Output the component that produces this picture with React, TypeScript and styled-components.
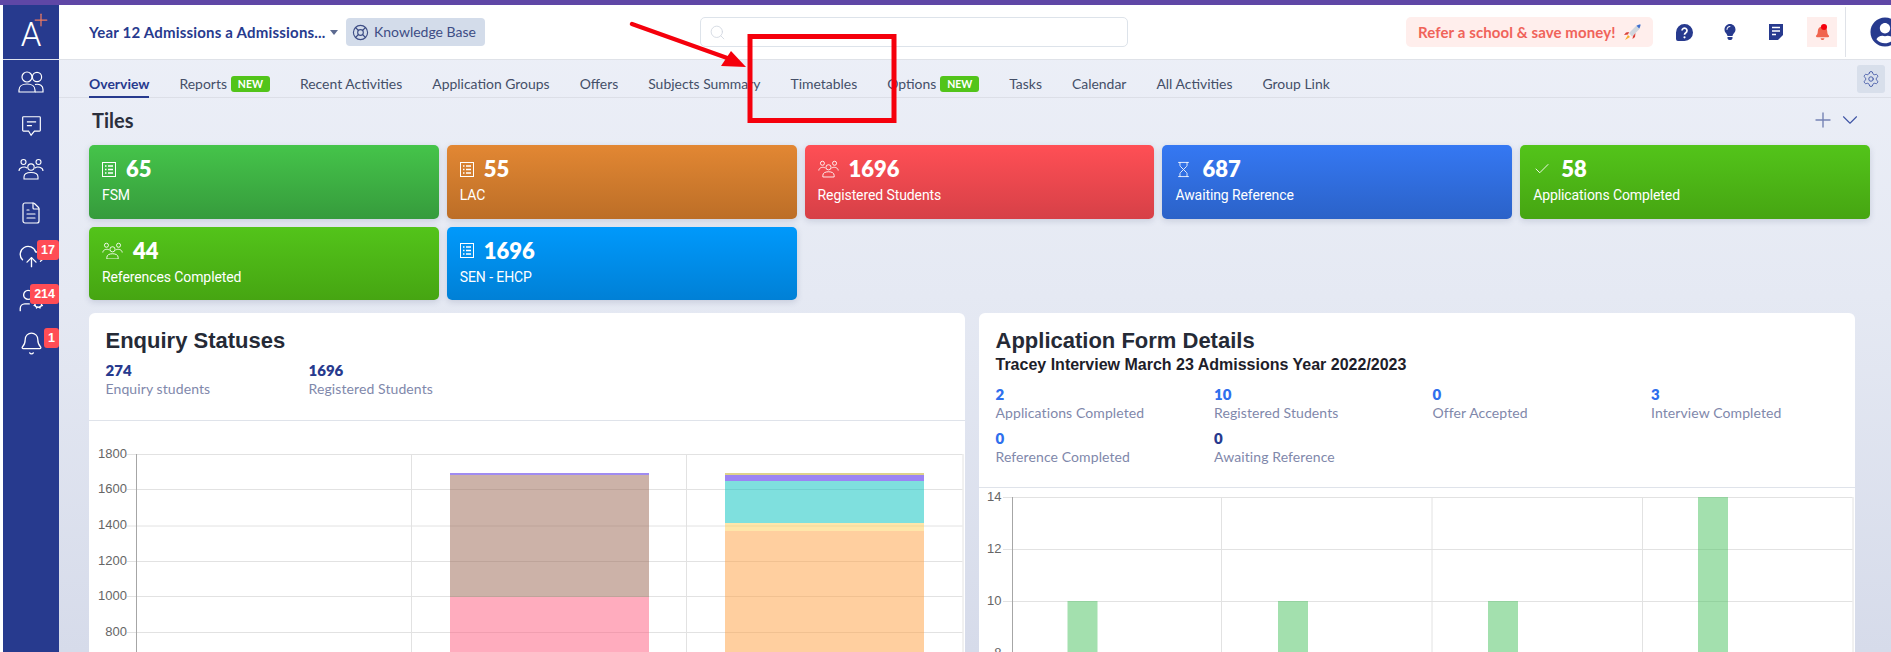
import React from "react";
import styled, { createGlobalStyle } from "styled-components";
import { FaBell, FaLightbulb, FaUserCircle } from "react-icons/fa";
import { LifeBuoy, Search, Settings, Plus, ChevronDown, Hourglass, Check, FileText, CloudUpload, Bell, UserCog } from "lucide-react";

const Global = createGlobalStyle`
  html, body { margin: 0; padding: 0; height: 100%; background: #fff; overflow: hidden; }
  * { box-sizing: border-box; }
  body { font-family: Lato, "Liberation Sans", sans-serif; }
`;

const Page = styled.div`
  position: relative; width: 1891px; height: 652px; overflow: hidden;
  display: flex; flex-direction: column;
`;
const TopStrip = styled.div`height: 5px; flex: none; background: #5f47a6;`;
const Body = styled.div`flex: 1; display: flex; min-height: 0; padding-left: 3px;`;
const Side = styled.aside`width: 56px; flex: none; background: #273a8e; display: flex; flex-direction: column;`;
const LogoBox = styled.div`
  height: 55px; flex: none; position: relative; border-bottom: 1px solid #dfe3ee;
  display: flex; align-items: center; justify-content: center;
`;
const LogoA = styled.span`font: 300 33px/1 Roboto, sans-serif; color: #fff; margin-top: 5px;`;
const LogoPlus = styled(Plus)`position: absolute; left: 28px; top: 5px; color: #ee7a60;`;
const SideList = styled.nav`display: flex; flex-direction: column;`;
const SideItem = styled.div`
  height: 43.7px; position: relative; display: flex; align-items: center; justify-content: center;
  color: #fff;
`;
const Badge = styled.span`
  position: absolute; right: 0; top: 5.5px; height: 20px; min-width: 15px; padding: 0 4px;
  background: #ff4d55; color: #fff; border-radius: 3px; font: 700 12.5px/20px "Liberation Sans", sans-serif; text-align: center;
`;
const Main = styled.main`
  flex: 1; min-width: 0; display: flex; flex-direction: column;
  background: linear-gradient(180deg, #edf0f8 0%, #e5e9f3 45%, #d6dbea 100%);
`;
const Header = styled.header`
  height: 55px; flex: none; background: #fff; border-bottom: 1px solid #dfe2e8;
  display: flex; align-items: center; padding: 0 0 0 30px; position: relative;
`;
const Course = styled.div`
  width: 240px; flex: none; color: #273a8e; font: 700 15px/20px Lato, sans-serif; letter-spacing: .2px;
  white-space: nowrap; overflow: hidden;
`;
const Caret = styled.span`
  width: 0; height: 0; margin: 0 8px 0 1px; border-left: 4.5px solid transparent; border-right: 4.5px solid transparent;
  border-top: 5px solid #5c6a90;
`;
const Chip = styled.div`
  width: 139px; height: 28px; flex: none; border-radius: 4px; background: #d3dcea; color: #3d4d85;
  display: flex; align-items: center; gap: 5px; padding-left: 6px; font: 400 14px/1 Lato, sans-serif; white-space: nowrap;
`;
const SearchBox = styled.div`
  width: 428px; height: 30px; margin-left: 215px; flex: none; border: 1px solid #dde3ea; border-radius: 5px;
  display: flex; align-items: center; padding-left: 8px; color: #d3d9e2;
`;
const Refer = styled.div`
  width: 247px; height: 30px; margin-left: 278px; flex: none; border-radius: 5px; background: #ffeeec; color: #f0635a;
  display: flex; align-items: center; gap: 8px; padding-left: 12px; font: 700 15px/1 Lato, sans-serif; letter-spacing: .1px; white-space: nowrap;
`;
const IconRow = styled.div`display: flex; gap: 16px; margin-left: 16px; flex: none;`;
const HeadIcon = styled.div<{ $hot?: boolean }>`
  width: 30px; height: 30px; position: relative; display: flex; align-items: center; justify-content: center;
  color: ${p => (p.$hot ? "#f0654f" : "#273a8e")}; background: ${p => (p.$hot ? "#feeeec" : "transparent")};
`;
const BellDot = styled.span`position: absolute; left: 14px; top: 7px; width: 6px; height: 6px; border-radius: 50%; background: #f5000c;`;
const VRule = styled.div`width: 1px; height: 50px; background: #dfe2e8; margin-left: 8px; flex: none;`;
const Avatar = styled(FaUserCircle)`margin-left: 24px; flex: none; color: #273a8e;`;

const TabBar = styled.div`
  height: 38px; flex: none; border-bottom: 1px solid #dcdfe7; display: flex; align-items: stretch;
  padding: 0 6px 0 30px; gap: 30px; position: relative;
`;
const Tab = styled.div<{ $active?: boolean }>`
  display: flex; align-items: center; gap: 4px; padding-top: 12px; white-space: nowrap; height: 38px;
  font: ${p => (p.$active ? 700 : 400)} 13.95px/20px Lato, sans-serif;
  color: ${p => (p.$active ? "#273a8e" : "#444f68")};
  border-bottom: 2px solid ${p => (p.$active ? "#273a8e" : "transparent")};
`;
const NewTag = styled.span`
  width: 39px; height: 16px; border-radius: 3px; background: #52c41a; color: #fff; text-align: center;
  font: 700 10.5px/16px Lato, sans-serif;
`;
const GearBtn = styled.div`
  position: absolute; right: 6px; top: 5px; width: 28px; height: 28px; border-radius: 3px; background: #d8dfeb; color: #3f55a5;
  display: flex; align-items: center; justify-content: center;
`;

const Content = styled.div`flex: 1; padding: 0 21px 0 30px; min-height: 0;`;
const SectionHead = styled.div`height: 47px; padding: 10px 7.5px 13px 3px; display: flex; align-items: center; justify-content: space-between;`;
const SectionTitle = styled.h2`margin: 0; font: 700 20px/24px Lato, sans-serif; color: #2b2f3d;`;
const SectionTools = styled.div`display: flex; align-items: center; gap: 1.5px; color: #7683b5;`;
const TileGrid = styled.div`display: grid; grid-template-columns: repeat(5, 1fr); gap: 8px;`;
const Tile = styled.div<{ $from: string; $to: string }>`
  height: 73.5px; border-radius: 5px; padding: 12px 13px 0; color: #fff;
  background: linear-gradient(180deg, ${p => p.$from}, ${p => p.$to});
  box-shadow: 0 2px 6px rgba(60, 70, 110, .18);
`;
const TileTop = styled.div`display: flex; align-items: center; gap: 10px; height: 24px;`;
const TileNum = styled.span`font: 800 22px/24px Lato, sans-serif;`;
const TileLabel = styled.div`margin-top: 4px; font: 400 14px/20px Roboto, sans-serif; white-space: nowrap; letter-spacing: -.1px;`;

const Panels = styled.div`display: flex; gap: 14px; margin-top: 13px;`;
const Panel = styled.section`width: 876px; flex: none; background: #fff; border-radius: 6px 6px 0 0; overflow: hidden;`;
const PanelHead = styled.div<{ $h: number }>`height: ${p => p.$h}px; padding: 15px 16.5px 0; border-bottom: 1px solid #dfe3ea;`;
const PanelTitle = styled.h3`margin: 0; font: 700 22px/26px "Liberation Sans", sans-serif; color: #252a36;`;
const PanelSub = styled.div`margin: 1px 0 10px; font: 700 16px/20px "Liberation Sans", sans-serif; color: #1d2029;`;
const Stats = styled.div<{ $w: number; $top?: number }>`
  display: grid; grid-template-columns: repeat(4, ${p => p.$w}px); row-gap: 6px; margin-top: ${p => p.$top ?? 0}px;
`;
const StatNum = styled.div<{ $c: string }>`font: 800 15px/18px Lato, sans-serif; color: ${p => p.$c};`;
const StatLabel = styled.div`font: 400 14px/20px Lato, sans-serif; letter-spacing: .1px; color: #7f88ab; white-space: nowrap;`;
const ChartSvg = styled.svg`display: block;`;
const ArrowLayer = styled.svg`position: absolute; left: 0; top: 0; pointer-events: none;`;

const TwoPeople = () => (
  <svg width="26" height="24" viewBox="0 0 26 24" fill="none" stroke="currentColor" strokeWidth="1.2">
    <circle cx="9" cy="7" r="5" /><circle cx="19" cy="7" r="4.6" />
    <path d="M1 22v-2c0-3.5 3-6 8-6s8 2.500 8 6v2z" /><path d="M17 14.500c5-1 8 1.500 8 5v2.500h-8" />
  </svg>
);
const ThreePeople = ({ s = 26 }: { s?: number }) => (
  <svg width={s} height={s * 0.85} viewBox="0 0 26 22" fill="none" stroke="currentColor" strokeWidth="1.1">
    <circle cx="5.500" cy="4" r="2.500" /><circle cx="20.500" cy="4" r="2.500" /><circle cx="13" cy="9" r="3.200" />
    <path d="M1 13c0-4 6-5 8-3" /><path d="M25 13c0-4-6-5-8-3" />
    <path d="M6 21v-2c0-3 3-4.500 7-4.500s7 1.500 7 4.500v2z" />
  </svg>
);
const Bubble = () => (
  <svg width="21" height="22" viewBox="0 0 25 26" fill="none" stroke="currentColor" strokeWidth="1.4">
    <path d="M3 2h19a1 1 0 0 1 1 1v15a1 1 0 0 1-1 1h-6l-4 5-3-5H3a1 1 0 0 1-1-1V3a1 1 0 0 1 1-1z" />
    <path d="M7 8h11M7 12.500h6" />
  </svg>
);
const ListBox = () => (
  <svg width="14" height="15" viewBox="0 0 14 15" fill="none" stroke="currentColor" strokeWidth="1">
    <rect x=".5" y=".5" width="13" height="14" /><path d="M3 4h1.500M6 4h5M3 7.500h1.500M6 7.500h5M3 11h1.500M6 11h5" strokeWidth="1.400" />
  </svg>
);
const QuestionIcon = () => (
  <svg width="17" height="17" viewBox="0 0 17 17">
    <path d="M8.500 0a8.500 8.500 0 1 1 0 17H2a2 2 0 0 1-2-2V8.500A8.500 8.500 0 0 1 8.500 0z" fill="currentColor" />
    <path d="M6 6.500a2.500 2.500 0 1 1 3.800 2.200c-.9.600-1.300 1-1.300 2" fill="none" stroke="#fff" strokeWidth="1.700" />
    <circle cx="8.500" cy="13.300" r="1.100" fill="#fff" />
  </svg>
);
const NoteIcon = () => (
  <svg width="14" height="16" viewBox="0 0 14 16">
    <path d="M0 0h14v11l-5 5H0z" fill="currentColor" />
    <path d="M3 3.500h8M3 7h8M3 10.500h4" stroke="#fff" strokeWidth="1.600" />
  </svg>
);
const Rocket = () => (
  <svg width="17" height="17" viewBox="0 0 17 17">
    <path d="M5 9 12 2c1.500-1 3.500-1.500 4.500-1.500C16.500 2 16 4 15 5.500L8 12.500z" fill="#cfd5dd" />
    <path d="M12.500 1.700c1.300-.7 3-1.200 4-1.200 0 1.200-.5 2.800-1.300 4z" fill="#3f6fd0" />
    <path d="M5 8 2 8.500 0 11l4-.5zM9 12l-.5 3 2.500-2 .5-4z" fill="#d9413a" />
    <path d="M4 11 1 16l5-3z" fill="#f6b02c" />
  </svg>
);

const tabs = [
  { t: "Overview", active: true }, { t: "Reports", isNew: true }, { t: "Recent Activities" }, { t: "Application Groups" },
  { t: "Offers" }, { t: "Subjects Summary" }, { t: "Timetables" }, { t: "Options", isNew: true }, { t: "Tasks" },
  { t: "Calendar" }, { t: "All Activities" }, { t: "Group Link" },
];
const tiles = [
  { n: "65", l: "FSM", i: <ListBox />, a: "#45c44a", b: "#369b3c" },
  { n: "55", l: "LAC", i: <ListBox />, a: "#e28733", b: "#bc6e27" },
  { n: "1696", l: "Registered Students", i: <ThreePeople s={21} />, a: "#ff4f55", b: "#d64047" },
  { n: "687", l: "Awaiting Reference", i: <Hourglass size={17} strokeWidth={1.2} />, a: "#3578f3", b: "#2b62c8" },
  { n: "58", l: "Applications Completed", i: <Check size={18} strokeWidth={1.2} />, a: "#53c41a", b: "#46a512" },
  { n: "44", l: "References Completed", i: <ThreePeople s={21} />, a: "#53c41a", b: "#46a512" },
  { n: "1696", l: "SEN - EHCP", i: <ListBox />, a: "#0099fb", b: "#0080d6" },
];
const sideItems = [
  { i: <TwoPeople /> }, { i: <Bubble /> }, { i: <ThreePeople /> }, { i: <FileText size={24} strokeWidth={1.2} /> },
  { i: <CloudUpload size={27} strokeWidth={1.2} />, b: "17" }, { i: <UserCog size={27} strokeWidth={1.2} />, b: "214" },
  { i: <Bell size={25} strokeWidth={1.2} />, b: "1" },
];
const rightStats = [
  ["2", "Applications Completed", "#2f6fed"], ["10", "Registered Students", "#2f6fed"], ["0", "Offer Accepted", "#2f6fed"],
  ["3", "Interview Completed", "#2f6fed"], ["0", "Reference Completed", "#2f6fed"], ["0", "Awaiting Reference", "#273a8e"],
];

const grid = "#e2e2e2";
const LeftChart = () => {
  const ys = [[1800, 33], [1600, 68], [1400, 104.500], [1200, 140], [1000, 175], [800, 211]] as const;
  const vx = [47, 322, 597, 873.500];
  const left = [["rgba(255,90,125,.5)", 176, 55], ["rgba(153,102,82,.5)", 54, 122], ["rgba(120,90,235,.7)", 52, 2]] as const;
  const right = [["rgba(255,159,64,.5)", 110, 121], ["rgba(255,205,86,.5)", 102, 8], ["rgba(0,193,190,.5)", 60, 42], ["rgba(90,50,235,.6)", 54, 6], ["rgba(200,180,60,.6)", 52, 2]] as const;
  return (
    <ChartSvg width="876" height="231" viewBox="0 0 876 231">
      {ys.map(([v, y]) => (
        <g key={v}>
          <line x1="38" x2="873.500" y1={y + .5} y2={y + .5} stroke={grid} />
          <text x="38" y={y + 3.500} textAnchor="end" fontSize="13" fill="#666" fontFamily="Liberation Sans">{v}</text>
        </g>
      ))}
      {vx.map((x, i) => <line key={x} x1={x + .5} x2={x + .5} y1="33" y2="231" stroke={i ? grid : "#a6a6a6"} />)}
      {left.map(([c, y, h]) => <rect key={c} x="361" y={y} width="199" height={h} fill={c} />)}
      {right.map(([c, y, h]) => <rect key={c} x="636" y={y} width="199" height={h} fill={c} />)}
    </ChartSvg>
  );
};
const RightChart = () => {
  const ys = [[14, 9], [12, 61], [10, 113], [8, 165]] as const;
  const vx = [33, 242, 452.500, 663, 873.500];
  const bars = [[88.500, 113], [299, 113], [509, 113], [719, 9]] as const;
  return (
    <ChartSvg width="876" height="164" viewBox="0 0 876 164">
      {ys.map(([v, y]) => (
        <g key={v}>
          <line x1="24" x2="873.500" y1={y + .5} y2={y + .5} stroke={grid} />
          <text x="22.500" y={y + 3.500} textAnchor="end" fontSize="13" fill="#666" fontFamily="Liberation Sans">{v}</text>
        </g>
      ))}
      {vx.map((x, i) => <line key={x} x1={x + .5} x2={x + .5} y1="9" y2="164" stroke={i ? grid : "#a6a6a6"} />)}
      {bars.map(([x, y]) => <rect key={x} x={x} y={y} width="30" height={164 - y} fill="rgba(71,193,93,.5)" />)}
    </ChartSvg>
  );
};

export default function App() {
  return (
    <Page>
      <Global />
      <TopStrip />
      <Body>
        <Side>
          <LogoBox><LogoA>A</LogoA><LogoPlus size={20} strokeWidth={1.5} /></LogoBox>
          <SideList>
            {sideItems.map((s, i) => <SideItem key={i}>{s.i}{s.b && <Badge>{s.b}</Badge>}</SideItem>)}
          </SideList>
        </Side>
        <Main>
          <Header>
            <Course>Year 12 Admissions a Admissions...</Course>
            <Caret />
            <Chip><LifeBuoy size={17} strokeWidth={1.6} />Knowledge Base</Chip>
            <SearchBox><Search size={17} strokeWidth={1.3} /></SearchBox>
            <Refer>Refer a school &amp; save money!<Rocket /></Refer>
            <IconRow>
              <HeadIcon><QuestionIcon /></HeadIcon>
              <HeadIcon><FaLightbulb size={16} /></HeadIcon>
              <HeadIcon><NoteIcon /></HeadIcon>
              <HeadIcon $hot><FaBell size={15} /><BellDot /></HeadIcon>
            </IconRow>
            <VRule />
            <Avatar size={30} />
          </Header>
          <TabBar>
            {tabs.map(t => (
              <Tab key={t.t} $active={t.active}>{t.t}{t.isNew && <NewTag>NEW</NewTag>}</Tab>
            ))}
            <GearBtn><Settings size={18} strokeWidth={1.2} /></GearBtn>
          </TabBar>
          <Content>
            <SectionHead>
              <SectionTitle>Tiles</SectionTitle>
              <SectionTools><Plus size={24} strokeWidth={1.4} /><ChevronDown size={26} strokeWidth={1} color="#3f55a5" /></SectionTools>
            </SectionHead>
            <TileGrid>
              {tiles.map(t => (
                <Tile key={t.l} $from={t.a} $to={t.b}>
                  <TileTop>{t.i}<TileNum>{t.n}</TileNum></TileTop>
                  <TileLabel>{t.l}</TileLabel>
                </Tile>
              ))}
            </TileGrid>
            <Panels>
              <Panel>
                <PanelHead $h={108}>
                  <PanelTitle>Enquiry Statuses</PanelTitle>
                  <Stats $w={203} $top={7}>
                    <div><StatNum $c="#273a8e">274</StatNum><StatLabel>Enquiry students</StatLabel></div>
                    <div><StatNum $c="#273a8e">1696</StatNum><StatLabel>Registered Students</StatLabel></div>
                  </Stats>
                </PanelHead>
                <LeftChart />
              </Panel>
              <Panel>
                <PanelHead $h={175}>
                  <PanelTitle>Application Form Details</PanelTitle>
                  <PanelSub>Tracey Interview March 23 Admissions Year 2022/2023</PanelSub>
                  <Stats $w={218.500}>
                    {rightStats.map(([n, l, c]) => <div key={l}><StatNum $c={c}>{n}</StatNum><StatLabel>{l}</StatLabel></div>)}
                  </Stats>
                </PanelHead>
                <RightChart />
              </Panel>
            </Panels>
          </Content>
        </Main>
      </Body>
      <ArrowLayer width="1891" height="652" viewBox="0 0 1891 652">
        <path d="M632 24 730 59" stroke="#f5000c" strokeWidth="4.500" strokeLinecap="round" />
        <path d="M746 67 721 66 731 51z" fill="#f5000c" />
        <rect x="750" y="36.500" width="144" height="84" fill="none" stroke="#f5000c" strokeWidth="5" />
      </ArrowLayer>
    </Page>
  );
}
